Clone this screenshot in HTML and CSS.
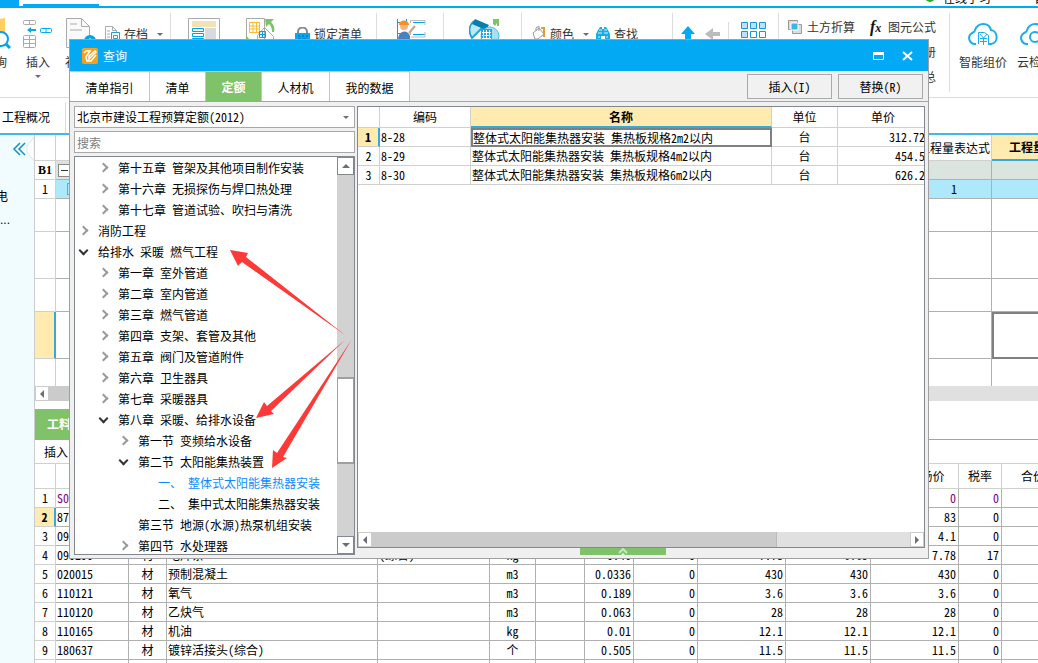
FILE: index.html
```html
<!DOCTYPE html>
<html lang="zh-CN">
<head>
<meta charset="utf-8">
<title>查询</title>
<link rel="stylesheet" href="styles.css">
</head>
<body>
<div class="app">
  <header class="menubar">
    <span class="menu-block"></span><span class="menu-tab"></span>
    <span class="online"><i class="dot"></i>在线学习</span><span class="user">曾</span>
  </header>

  <nav class="ribbon">
    <div class="group group-main">
      <button class="big"><svg width="32" height="32" viewBox="0 0 32 32" fill="none"><path d="M3 5 26 1v16H3z" fill="#ffd15c"/><circle cx="22" cy="22" r="7" fill="#fff" stroke="#03a3ea" stroke-width="2"/><path d="m27 27 4 4" stroke="#03a3ea" stroke-width="3"/></svg>查询</button>
      <button class="big insert"><svg width="30" height="32" viewBox="0 0 30 32" fill="none" stroke="#aaa"><rect x=".5" y="3.500" width="12" height="4" rx="1"/><path d="M6.500 3v5"/><path d="M4 13l4-3v2h5v2H8v2z" fill="#03a9f4" stroke="none"/><rect x="17.500" y="11.500" width="11" height="4" rx="1" stroke="#03a9f4"/><path d="M23 11v5" stroke="#03a9f4"/><rect x=".5" y="18.500" width="12" height="12" rx="1"/><path d="M6.500 18v13M0 22.500h13M0 26.500h13"/></svg>插入<i class="caret"></i></button>
      <button class="big patch"><svg width="32" height="32" viewBox="0 0 32 32" fill="none" stroke="#aaa"><path d="M1.500 1.500h15l8 8v21h-23z" fill="#fafafa"/><path d="M16.500 1.500v8h8M5 7h7M5 13h12"/><circle cx="25" cy="24" r="6" fill="#03a3ea" stroke="none"/><path d="M22 24h6M25 21v6" stroke="#fff"/></svg>补充</button>
      <button class="small"><svg width="17" height="17" viewBox="0 0 17 17" fill="none" stroke="#aaa"><path d="M1.500 15.500V.5h7l4 4v2M8.500.5v4h4M3 5h3M3 8h3M3 11h3"/><path d="M7.500 6.500h8v9h-8zM9.500 9.500h4v3h-4z" stroke="#2a9fcb"/></svg>存档<i class="caret"></i></button>
    </div>
    <div class="group group-list">
      <button class="plain"><svg width="32" height="32" viewBox="0 0 32 32" fill="none"><path d="M.5.500h31v31H.5z" stroke="#aaa"/><path d="M4 3h24v6H4z" fill="#f3e2b4"/><path d="M17 10h11v20H17z" fill="#d9dadd"/><path d="M4.500 10.500h11v3h-11zm0 5h11v3h-11zm0 5h11v3h-11z" stroke="#03a3ea"/></svg></button>
      <button class="plain"><svg width="32" height="32" viewBox="0 0 32 32" fill="none"><path d="M1.500.5h18v30h-18zM19.500 9.500l9 9v12h-16v-13z" fill="#fff" stroke="#aaa"/><path d="M4.500 4.500h10v10h-10zM8 4v10M11.500 4v10M4 8h10M4 11h10" stroke="#f8bd35"/><path d="M14.500 13.500h6v6h-6zM17.500 13v7M14 16.500h7" stroke="#03a3ea"/><path d="M20 1h9l-3 3c3 3 4 6 3 10h-2c0-4-1-6-3-8l-3 3zM1 17l3 4-3 4z" fill="#7dc467"/></svg></button>
      <button class="small"><svg width="15" height="15" viewBox="0 0 15 15"><path d="M3 7V5a4 4 0 0 1 9 0v2" fill="none" stroke="#888" stroke-width="2"/><path d="M0 6h15v9H0z" fill="#03a9f4"/><path d="M3 9h2m2 0h2m2 0h2M3 12h3m2 0h4" stroke="#08649b"/></svg>锁定清单</button>
    </div>
    <div class="group group-work">
      <button class="plain"><svg width="32" height="32" viewBox="0 0 32 32" fill="none"><path d="M1.500 1v24M10.500 1v4M1 4.500h10M1 15.500h4m12-11h12M17 16.500h12" stroke="#03a3ea"/><path d="M14.500 5V2.500H29V7M14.500 17v-2.500M29 14v5H15" stroke="#bbb"/><circle cx="8" cy="8" r="4" fill="#f5b184"/><path d="M3 7c0-6 10-6 10 0z" fill="#f5921d"/><path d="M2 22c0-10 10-11 12-4v6H2z" fill="#4c7fbd"/><path d="m13 15 6-7" stroke="#c0a48c" stroke-width="2"/></svg></button>
    </div>
    <div class="group group-calc">
      <button class="plain"><svg width="32" height="32" viewBox="0 0 32 32" fill="none"><path d="M5 3C-1 8 0 15 3 20L15 8" stroke="#22a7d4" stroke-width="2" fill="#bce8f7"/><path d="m6 1 14 6-3 5L3 6z" fill="#087eac"/><circle cx="21" cy="18" r="9" fill="#aadef5" stroke="#4fbfe6"/><path d="M12 11h11v13H12z" fill="#18ace8"/><path d="M14.500 12v10m3-10v10m3-10v10M13 14.500h9m-9 3h9m-9 3h9" stroke="#fff"/><path d="M24 1h6v7h-2V5l-2 3-2-2z" fill="#7dc467"/></svg></button>
    </div>
    <div class="group group-find">
      <button class="small"><svg width="16" height="16" viewBox="0 0 16 16" fill="none"><path d="m2 7 6-5 5 6-6 5H4zM5 5V2l3-2v5" fill="#fff" stroke="#999"/><path d="M10 2h3v9" stroke="#e49a35" stroke-width="2"/><path d="M0 13h16v3H0z" fill="#f28b50"/></svg>颜色<i class="caret"></i></button>
      <button class="small"><svg width="16" height="16" viewBox="0 0 16 16" fill="#15aee2"><path d="M3 4 5 1h2v2h2V1h2l2 3 2 4v7h-5v-5H6v5H1V8z"/><path d="M3 7h4m2 0h4M3 11h2m6 0h2M4 4h3m2 0h3" stroke="#d8f5ff"/></svg>查找</button>
    </div>
    <div class="group group-move">
      <button class="plain"><svg width="16" height="16" viewBox="0 0 16 16"><path d="m8 0 7 8h-4v8H5V8H1z" fill="#03a9f4"/></svg></button>
      <button class="plain"><svg width="16" height="16" viewBox="0 0 16 16"><path d="m0 8 8-6v4h7v4H8v4z" fill="#bbb"/></svg></button>
    </div>
    <div class="group group-tiles">
      <button class="plain"><svg width="26" height="16" viewBox="0 0 26 16" fill="#c0e0f5" stroke="#139bd9"><path d="M.5.500h6v6h-6zm9 0h6v6h-6zm9 0h6v6h-6zm-18 9h6v6h-6z"/><path d="M9.500 9.500h6v6h-6zm9 0h6v6h-6z" fill="#fff"/></svg></button>
    </div>
    <div class="group group-tools">
      <button class="small"><svg width="14" height="14" viewBox="0 0 14 14" fill="#ddd" stroke="#999"><path d="M.5.500h9v9h-9zM4.500 4.500h9v9h-9z"/><path d="M3 3h7v7H3z" fill="#3fb5df" stroke="#fff"/></svg>土方折算</button>
      <button class="small"><b class="fx">f<i>x</i></b>图元公式</button>
      <span class="more">五金手册</span>
      <span class="more">查看汇总</span>
    </div>
    <div class="group group-cloud">
      <button class="big"><svg width="30" height="24" viewBox="0 0 30 24" fill="none" stroke="#1caee9" stroke-width="2"><path d="M8 21H7C1 21-1 13 4 10c2-1 3-1 3-3C10-1 21-1 23 7c7 1 8 13 0 14h-3"/><path d="M10.500 21V9.500h6l4 3V21M12 11l3.500 4 3.500-4M12 15.500h7m-7 3h7m-3.500-3.500v7" stroke-width="1"/></svg>智能组价</button>
      <button class="big"><svg width="30" height="24" viewBox="0 0 30 24" fill="none" stroke="#1caee9" stroke-width="2"><path d="M8 21H7C1 21-1 13 4 10c2-1 3-1 3-3C10-1 21-1 23 7c7 1 8 13 0 14"/><circle cx="15" cy="14" r="5"/><path d="m18 18 4 4"/></svg>云检查</button>
    </div>
  </nav>

  <div class="pagetabs"><a href="#">工程概况</a></div>

  <div class="workspace">
    <aside class="sidebar">
      <svg class="collapse" width="34" height="28" viewBox="0 0 34 28" fill="none"><path d="M34 2v24l-7-9v-6z" fill="#fff" stroke="#e0e8e8"/><path d="m20 8-6 6 6 6M25 8l-6 6 6 6" stroke="#178fc0" stroke-width="1.500"/></svg>
      <span class="side-item">机电</span>
      <span class="side-item dots">...</span>
    </aside>
    <main class="main">
      <div class="upper">
        <table class="grid">
          <colgroup><col class="u1"><col class="u2"><col class="u3"><col class="u4"></colgroup>
          <tr class="h26"><th></th><th></th><th>工程量表达式</th><th class="active">工程量</th></tr>
          <tr class="shade"><th class="section">B1</th><td><i class="minus"></i></td><td></td><td></td></tr>
          <tr class="selected"><th>1</th><td class="branch"><i></i></td><td class="c">1</td><td></td></tr>
          <tr class="h33"><th></th><td></td><td></td><td></td></tr>
          <tr class="h47"><th></th><td></td><td></td><td></td></tr>
          <tr class="h33"><th></th><td></td><td></td><td></td></tr>
          <tr class="h47"><th class="current"></th><td></td><td></td><td class="focus"></td></tr>
          <tr class="h28"><th></th><td></td><td></td><td></td></tr>
        </table>
      </div>
      <div class="hscroll"><i class="btn left"></i><i class="thumb"></i></div>
      <div class="lowertabs"><button>工料机显示</button></div>
      <div class="lowerbar"><button>插入</button></div>
      <div class="lower">
        <table class="grid dark">
          <colgroup><col class="l1"><col class="l2"><col class="l3"><col class="l4"><col class="l5"><col class="l6"><col class="l7"><col class="l7"><col class="l8"><col class="l9"><col class="l10"><col class="l9"><col class="l11"><col class="l12"></colgroup>
          <tr class="h25"><th></th><th></th><th></th><th></th><th></th><th></th><th></th><th></th><th></th><th></th><th></th><th>含税市场价</th><th>税率</th><th>合价</th></tr>
          <tr class="purple"><th>1</th><td>S0</td><td></td><td></td><td></td><td></td><td></td><td></td><td></td><td></td><td></td><td>0</td><td>0</td><td></td></tr>
          <tr><th class="current">2</th><td>87</td><td></td><td></td><td></td><td></td><td></td><td></td><td></td><td></td><td></td><td>83</td><td>0</td><td></td></tr>
          <tr><th>3</th><td>09</td><td></td><td></td><td></td><td></td><td></td><td></td><td></td><td></td><td></td><td>4.1</td><td>0</td><td></td></tr>
          <tr><th>4</th><td>090290</td><td>材</td><td>电焊条</td><td>(综合)</td><td>kg</td><td></td><td>0.46</td><td>0</td><td>7.78</td><td class="blue">6.65</td><td>7.78</td><td>17</td><td></td></tr>
          <tr><th>5</th><td>020015</td><td>材</td><td>预制混凝土</td><td></td><td>m3</td><td></td><td>0.0336</td><td>0</td><td>430</td><td>430</td><td>430</td><td>0</td><td></td></tr>
          <tr><th>6</th><td>110121</td><td>材</td><td>氧气</td><td></td><td>m3</td><td></td><td>0.189</td><td>0</td><td>3.6</td><td>3.6</td><td>3.6</td><td>0</td><td></td></tr>
          <tr><th>7</th><td>110120</td><td>材</td><td>乙炔气</td><td></td><td>m3</td><td></td><td>0.063</td><td>0</td><td>28</td><td>28</td><td>28</td><td>0</td><td></td></tr>
          <tr><th>8</th><td>110165</td><td>材</td><td>机油</td><td></td><td>kg</td><td></td><td>0.01</td><td>0</td><td>12.1</td><td>12.1</td><td>12.1</td><td>0</td><td></td></tr>
          <tr><th>9</th><td>180637</td><td>材</td><td>镀锌活接头(综合)</td><td></td><td>个</td><td></td><td>0.505</td><td>0</td><td>11.5</td><td>11.5</td><td>11.5</td><td>0</td><td></td></tr>
          <tr><th></th><td></td><td></td><td></td><td></td><td></td><td></td><td></td><td></td><td></td><td></td><td></td><td></td><td></td></tr>
        </table>
      </div>
    </main>
  </div>
</div>

<section class="dialog" role="dialog" aria-label="查询">
  <div class="titlebar">
    <svg width="16" height="16" viewBox="0 0 16 16" fill="none"><rect width="16" height="16" rx="2" fill="#f9a01b"/><path d="m2 5 2-2h4L4 9l1 4h4l5-6M7 8l6-5 1 1-7 7z" stroke="#fff" stroke-width="1.500"/></svg>
    <span class="title">查询</span>
    <button aria-label="最大化"><svg width="12" height="8" viewBox="0 0 12 8"><path d="M.5.500h10v7H.5z" fill="none" stroke="#fff"/><path d="M0 0h11v3H0z" fill="#fff"/></svg></button>
    <button aria-label="关闭"><svg width="12" height="10" viewBox="0 0 12 10"><path d="m1 1 9 8M10 1 1 9" stroke="#fff" stroke-width="2"/></svg></button>
  </div>
  <div class="tabs">
    <button class="t80">清单指引</button><button class="t56">清单</button><button class="t56 on">定额</button><button class="t68">人材机</button><button class="t80">我的数据</button>
    <span class="actions"><button>插入(I)</button><button>替换(R)</button></span>
  </div>
  <div class="content">
    <div class="catalog">
      <div class="combo"><select aria-label="定额库"><option>北京市建设工程预算定额(2012)</option></select><i class="caret"></i></div>
      <input class="search" type="text" placeholder="搜索" aria-label="搜索">
      <div class="treebox">
        <ul class="tree">
          <li class="v1 shut">第十五章 管架及其他项目制作安装</li>
          <li class="v1 shut">第十六章 无损探伤与焊口热处理</li>
          <li class="v1 shut">第十七章 管道试验、吹扫与清洗</li>
          <li class="v0 shut">消防工程</li>
          <li class="v0 open">给排水 采暖 燃气工程</li>
          <li class="v1 shut">第一章 室外管道</li>
          <li class="v1 shut">第二章 室内管道</li>
          <li class="v1 shut">第三章 燃气管道</li>
          <li class="v1 shut">第四章 支架、套管及其他</li>
          <li class="v1 shut">第五章 阀门及管道附件</li>
          <li class="v1 shut">第六章 卫生器具</li>
          <li class="v1 shut">第七章 采暖器具</li>
          <li class="v1 open">第八章 采暖、给排水设备</li>
          <li class="v2 shut">第一节 变频给水设备</li>
          <li class="v2 open">第二节 太阳能集热装置</li>
          <li class="v3 picked">一、 整体式太阳能集热器安装</li>
          <li class="v3">二、 集中式太阳能集热器安装</li>
          <li class="v2">第三节 地源(水源)热泵机组安装</li>
          <li class="v2 shut">第四节 水处理器</li>
        </ul>
        <div class="vscroll"><i class="btn up"></i><i class="track-a"></i><i class="thumb"></i><i class="track-b"></i><i class="btn down"></i></div>
      </div>
    </div>
    <div class="detail">
      <div class="results">
        <div class="result-body">
          <table class="grid">
            <colgroup><col class="r1"><col class="r2"><col class="r3"><col class="r4"><col class="r5"></colgroup>
            <tr class="h21"><th></th><th>编码</th><th class="active">名称</th><th>单位</th><th>单价</th></tr>
            <tr><th class="current">1</th><td>8-28</td><td class="focus">整体式太阳能集热器安装 集热板规格2m2以内</td><td class="c">台</td><td class="n">312.72</td></tr>
            <tr><th>2</th><td>8-29</td><td>整体式太阳能集热器安装 集热板规格4m2以内</td><td class="c">台</td><td class="n">454.5</td></tr>
            <tr><th>3</th><td>8-30</td><td>整体式太阳能集热器安装 集热板规格6m2以内</td><td class="c">台</td><td class="n">626.2</td></tr>
          </table>
        </div>
        <div class="hscroll"><i class="btn left"></i><i class="thumb"></i><i class="btn rightward"></i></div>
      </div>
      <div class="splitter"><button aria-label="展开"><svg width="12" height="7" viewBox="0 0 12 7" fill="none"><path d="m2 5 4-4 4 4" stroke="#c9e8be" stroke-width="2"/><path d="m4 7 2-2 2 2z" fill="#fff"/></svg></button></div>
    </div>
  </div>
</section>

<svg class="arrows" width="360" height="480" viewBox="0 0 360 480" fill="#fd3a38" aria-hidden="true">
  <path d="m230 250 18 3-2 4 99 78-103-73-4 4z"/>
  <path d="m256 418 8-16 3 4 78-66-74 71 3 3z"/>
  <path d="m272 468 1-18 4 3 75-114-69 118 4 1z"/>
</svg>
</body>
</html>
```
FILE: styles.css
```css
* { box-sizing: border-box; }
html, body { height: 100%; }
body {
  margin: 0;
  overflow: hidden;
  background: #fff;
  color: #000;
  font: 12px/18px "Noto Sans Mono CJK SC", "Noto Sans CJK SC", sans-serif;
}
button { margin: 0; padding: 0; border: 0; background: none; font: inherit; color: inherit; }
svg { display: block; flex: none; }
.app { display: flex; flex-direction: column; height: 100vh; overflow: hidden; }

.caret { flex: none; border: 3px solid transparent; border-top-color: #6d6d78; border-bottom: 0; width: 0; height: 0; }

/* menu strip */
.menubar { flex: none; display: flex; align-items: flex-end; height: 8px; overflow: hidden; border-bottom: 2px solid #03a9f4; }
.menu-block { width: 19px; height: 6px; background: #03a9f4; }
.menu-tab { width: 76px; height: 2px; margin-left: 4px; background: #03a9f4; }
.online { display: flex; align-items: flex-end; gap: 8px; margin-left: auto; line-height: 12px; height: 12px; margin-bottom: 2px; font-family: "Noto Sans CJK SC", sans-serif; }
.dot { width: 10px; height: 6px; margin-bottom: 2px; border-radius: 0 0 6px 6px; background: #23b123; }
.user { height: 12px; margin-bottom: 2px; line-height: 12px; margin-left: 43px; margin-right: -8px; }

/* ribbon */
.ribbon { flex: none; display: flex; height: 90px; padding-top: 5px; border-bottom: 1px solid #ddd; overflow: hidden; font-family: "Noto Sans CJK SC", sans-serif; color: #333; }
.group { flex: none; display: flex; align-items: flex-start; height: 79px; border-right: 1px solid #ddd; }
.big { flex: none; display: flex; flex-direction: column; align-items: center; padding-top: 4px; gap: 4px; }
.small { flex: none; display: flex; align-items: center; gap: 4px; height: 18px; }
.plain { flex: none; padding-top: 5px; }
.group-main { width: 171px; gap: 12px; }
.group-main .big:first-child { margin-left: -21px; }
.group-main .patch { align-items: flex-start; }
.group-main .small { margin-top: 12px; margin-left: -5px; gap: 3px; }
.group-main .small .caret, .group-find .caret { margin-left: 6px; }
.group-list { width: 206px; padding-left: 17px; }
.group-list .plain + .plain { margin-left: 25px; }
.group-list .small { margin: 12px 0 0 18px; }
.group-work { width: 67px; padding-left: 19px; }
.group-calc { width: 78px; padding-left: 25px; }
.group-find { width: 151px; padding-left: 9px; gap: 6px; }
.group-find .small { margin-top: 12px; gap: 3px; }
.group-move { width: 56px; padding: 4px 0 0 7px; gap: 9px; margin-top: 9px; height: 70px; }
.group-move .plain { padding: 0; }
.group-tiles { width: 50px; padding: 4px 0 0 12px; }
.group-tools { width: 171px; display: grid; grid-template-columns: auto auto; grid-auto-rows: 25px; gap: 0 15px; justify-content: start; align-content: start; padding: 5px 0 0 9px; }
.group-tools .small { gap: 5px; }
.more { grid-column: 2; justify-self: end; }
.fx { width: 13px; font: italic bold 16px/16px "Liberation Serif", serif; color: #111; text-align: left; }
.fx i { font-size: 12px; }
.group-cloud { padding: 6px 0 0 9px; gap: 10px; border-right: 0; }
.group-cloud .big { gap: 6px; }

.pagetabs { flex: none; height: 37px; display: flex; align-items: flex-end; border-bottom: 2px solid #3fb8ea; }
.pagetabs a { display: block; width: 66px; height: 31px; padding: 6px 0 0 2px; border-right: 1px solid #ddd; color: #000; text-decoration: none; }

/* workspace */
.workspace { flex: 1; min-height: 0; display: flex; }
.sidebar { flex: none; width: 34px; background: #f0fcff; display: flex; flex-direction: column; overflow: hidden; }
.side-item { margin-left: -16px; margin-top: 24px; }
.sidebar .dots { margin: 6px 0 0; font-family: "Liberation Sans", sans-serif; }
.main { flex: 1; min-width: 0; display: flex; flex-direction: column; border-left: 1px solid #ccc; overflow: hidden; }
.upper { flex: none; height: 251px; overflow: hidden; }

/* grids */
.grid { table-layout: fixed; border-collapse: separate; border-spacing: 0; width: 0; }
.grid th, .grid td { height: 19px; padding: 0 1px; border-right: 1px solid #d0d0d0; border-bottom: 1px solid #d0d0d0; line-height: 18px; font-weight: normal; text-align: left; white-space: nowrap; overflow: hidden; }
.grid th { text-align: center; padding: 0; }
.grid td.c { text-align: center; }
.grid td.n { text-align: right; }
.grid .h21 th { height: 21px; }
.grid .h25 th { height: 25px; }
.grid .h26 th { height: 26px; }
.grid .h28 td { height: 28px; }
.grid .h33 td { height: 33px; }
.grid .h47 td { height: 47px; }
.grid th.active { background: #ffebb0; border-bottom: 2px solid #35a9d8; font-weight: bold; }
.grid th.current { background: #ffebb0; border-right: 2px solid #35a9d8; font-weight: bold; }
.grid td.focus { border: 2px solid #808080; padding: 0; line-height: 15px; }
.upper td, .dark td { border-color: #b0b0b0; }
.shade td { background: #dbe4df; }
.selected td { background: #aee9fb; }
.grid th.section { font-family: "Liberation Serif", serif; font-weight: bold; }
.minus { display: block; width: 13px; height: 13px; margin-left: 1px; border: 1px solid #888; background: linear-gradient(#333, #333) center / 7px 1px no-repeat #fff; }
.branch i { display: block; width: 8px; height: 12px; margin-left: 10px; border: 1px solid #999; }
.u1 { width: 21px; } .u2 { width: 861px; } .u3 { width: 75px; } .u4 { width: 71px; }
.l1 { width: 21px; } .l2 { width: 73px; } .l3 { width: 38px; } .l4 { width: 211px; } .l5 { width: 112px; } .l6 { width: 46px; } .l7 { width: 49px; } .l8 { width: 64px; } .l9 { width: 88px; } .l10 { width: 85px; } .l11 { width: 43px; } .l12 { width: 63px; }
.r1 { width: 22px; } .r2 { width: 91px; } .r3 { width: 301px; } .r4 { width: 66px; } .r5 { width: 91px; }
.dark td:nth-child(3), .dark td:nth-child(6) { text-align: center; }
.dark td:nth-child(n+7) { text-align: right; padding-right: 2px; }
.purple td { color: #800080; }
.dark td.blue { color: #00f; }

/* scrollbars */
.hscroll { flex: none; display: flex; height: 15px; background: #e0e0e0; }
.btn { flex: none; display: grid; place-items: center; width: 14px; background: #fff; border: 1px solid #ccc; }
.btn::before { content: ""; border: 4px solid transparent; }
.left::before { border-left: 0; border-right-color: #6d6d78; }
.rightward::before { border-right: 0; border-left-color: #6d6d78; }
.up::before { border-top: 0; border-bottom-color: #6d6d78; }
.down::before { border-bottom: 0; border-top-color: #6d6d78; }
.hscroll .thumb { width: 405px; background: #cbcbcb; border-right: 1px solid #bbb; }
.hscroll .rightward { margin-left: auto; }

.lowertabs { flex: none; height: 39px; padding-top: 8px; border-bottom: 1px solid #80c269; }
.lowertabs button { width: 84px; height: 30px; background: #80c269; color: #fff; font-weight: bold; }
.lowerbar { flex: none; height: 24px; padding: 3px 9px; border-bottom: 1px solid #d0d0d0; }
.lower { flex: 1; min-height: 0; overflow: hidden; }

/* dialog */
.dialog { position: absolute; left: 69px; right: 109px; top: 39px; bottom: 104px; display: flex; flex-direction: column; background: #f0f0f0; border: 1px solid #a0a0a0; }
.titlebar { flex: none; display: flex; align-items: center; height: 31px; padding: 0 14px 0 12px; gap: 5px; background: #04a9f3; color: #fff; }
.title { flex: 1; }
.titlebar button + button { margin-left: 12px; }
.tabs { flex: none; display: flex; height: 31px; border-bottom: 1px solid #80c269; }
.tabs > button { background: #fff; border-right: 1px solid #a9dc98; border-top: 1px solid #a9dc98; padding-top: 2px; }
.tabs > .on { background: #80c269; color: #fff; font-weight: bold; padding-top: 0; }
.t80 { width: 80px; } .t56 { width: 56px; } .t68 { width: 68px; }
.actions { display: flex; gap: 6px; margin: 3px 5px 0 auto; }
.actions button { width: 85px; height: 25px; border: 1px solid #aaa; background: #f1f1f1; }
.content { flex: 1; min-height: 0; display: flex; gap: 2px; padding: 4px 3px 3px 4px; }
.catalog { flex: none; width: 281px; display: flex; flex-direction: column; }
.combo { display: flex; align-items: center; height: 22px; background: #fff; border: 1px solid #a8a8a8; padding-right: 5px; }
.combo select { flex: 1; appearance: none; border: 0; background: none; padding: 0 2px; height: 20px; font: inherit; color: #000; }
.search { height: 22px; margin: 3px 0; border: 1px solid #a8a8a8; background: #fff; padding: 0 2px; font: inherit; }
.search::placeholder { color: #808080; opacity: 1; }
.treebox { flex: 1; min-height: 0; display: flex; border: 1px solid #828790; background: #fff; }
.tree { flex: 1; list-style: none; margin: 0; padding: 0; overflow: hidden; }
.tree li { display: flex; align-items: center; height: 21px; white-space: pre; }
.tree li::before { content: ""; box-sizing: border-box; width: 7px; height: 7px; margin-right: 11px; flex: none; }
.tree .shut::before { border: solid #999; border-width: 2px 2px 0 0; transform: rotate(45deg); }
.tree .open::before { border: solid #333; border-width: 0 2px 2px 0; margin-bottom: 3px; transform: rotate(45deg); }
.v0 { padding-left: 5px; } .v1 { padding-left: 25px; } .v2 { padding-left: 45px; } .v3 { padding-left: 65px; }
.picked { color: #0a8cff; }
.vscroll { flex: none; width: 17px; display: flex; flex-direction: column; background: #d2d2d2; }
.vscroll .btn { width: 17px; height: 18px; border-color: #828790; }
.track-a { flex: 205 0 0; }
.track-b { flex: 73 0 0; }
.vscroll .thumb { flex: 84 0 0; background: #fff; border: 1px solid #a0a0a0; border-width: 2px 1px; }
.detail { flex: 1; min-width: 0; display: flex; flex-direction: column; }
.results { flex: 1; min-height: 0; display: flex; flex-direction: column; background: #fff; border: 1px solid #828790; }
.result-body { flex: 1; min-height: 0; overflow: hidden; }
.result-body .n { padding-right: 3px; }
.splitter { flex: none; height: 7px; padding-left: 223px; }
.splitter button { display: flex; justify-content: center; width: 86px; height: 7px; background: #80c269; }

/* annotation arrows over the window */
.arrows { position: absolute; left: 0; top: 0; pointer-events: none; }
```
